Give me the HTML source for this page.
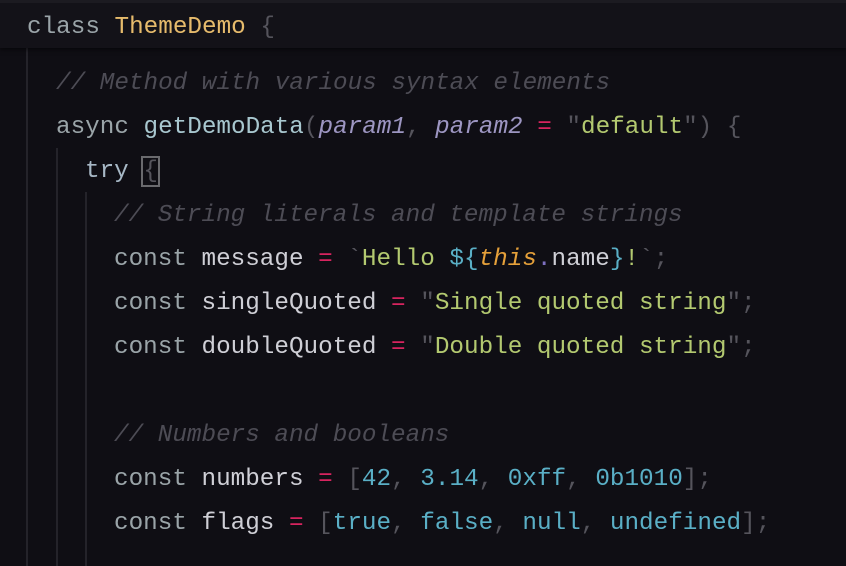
<!DOCTYPE html>
<html><head><meta charset="utf-8"><style>
html,body{margin:0;padding:0;width:846px;height:566px;overflow:hidden;background:#0f0e14;}
body{position:relative;font-family:"Liberation Mono",monospace;font-size:24.3px;}
.hdr{position:absolute;left:0;top:0;width:846px;height:48px;background:#131218;border-top:3px solid #1c1b21;box-sizing:border-box;box-shadow:0 2px 4px rgba(0,0,0,.5);z-index:2}
.l{position:absolute;white-space:pre;height:44px;line-height:44px;color:#cfcfd6}
.g{position:absolute;width:2px;background:#24232a}
.k{color:#9aa4a8}.c{color:#4d4c55;font-style:italic}.f{color:#a8c7cf}.p{color:#9d96c2;font-style:italic}
.s{color:#b3c970}.o{color:#d7245f}.n{color:#5aafc6}.d{color:#55545c}.t{color:#e5a03a;font-style:italic}.y{color:#e6bb6c}
.box{outline:2px solid #6a6a6e;outline-offset:0}
</style></head><body>
<div class="hdr"><div class="l" style="left:27px;top:3px"><span class="k">class</span> <span class="y">ThemeDemo</span> <span class="d">{</span></div></div>
<div class="g" style="left:26px;top:48px;height:518px"></div>
<div class="g" style="left:56px;top:148px;height:418px"></div>
<div class="g" style="left:85px;top:192px;height:374px"></div>
<div class="l" style="left:56px;top:62px"><span class="c">// Method with various syntax elements</span></div>
<div class="l" style="left:56px;top:106px"><span class="k">async</span> <span class="f">getDemoData</span><span class="d">(</span><span class="p">param1</span><span class="d">,</span> <span class="p">param2</span> <span class="o">=</span> <span class="d">"</span><span class="s">default</span><span class="d">") {</span></div>
<div class="l" style="left:85px;top:150px"><span class="k" style="color:#a7b8c6">try</span> <span class="d box">{</span></div>
<div class="l" style="left:114px;top:194px"><span class="c">// String literals and template strings</span></div>
<div class="l" style="left:114px;top:238px"><span class="k">const</span> message <span class="o">=</span> <span class="d">`</span><span class="s">Hello </span><span class="n">${</span><span class="t">this</span><span style="color:#7d6fc0">.</span>name<span class="n">}</span><span class="s">!</span><span class="d">`;</span></div>
<div class="l" style="left:114px;top:282px"><span class="k">const</span> singleQuoted <span class="o">=</span> <span class="d">"</span><span class="s">Single quoted string</span><span class="d">";</span></div>
<div class="l" style="left:114px;top:326px"><span class="k">const</span> doubleQuoted <span class="o">=</span> <span class="d">"</span><span class="s">Double quoted string</span><span class="d">";</span></div>
<div class="l" style="left:114px;top:414px"><span class="c">// Numbers and booleans</span></div>
<div class="l" style="left:114px;top:458px"><span class="k">const</span> numbers <span class="o">=</span> <span class="d">[</span><span class="n">42</span><span class="d">,</span> <span class="n">3.14</span><span class="d">,</span> <span class="n">0xff</span><span class="d">,</span> <span class="n">0b1010</span><span class="d">];</span></div>
<div class="l" style="left:114px;top:502px"><span class="k">const</span> flags <span class="o">=</span> <span class="d">[</span><span class="n">true</span><span class="d">,</span> <span class="n">false</span><span class="d">,</span> <span class="n">null</span><span class="d">,</span> <span class="n">undefined</span><span class="d">];</span></div>
</body></html>
